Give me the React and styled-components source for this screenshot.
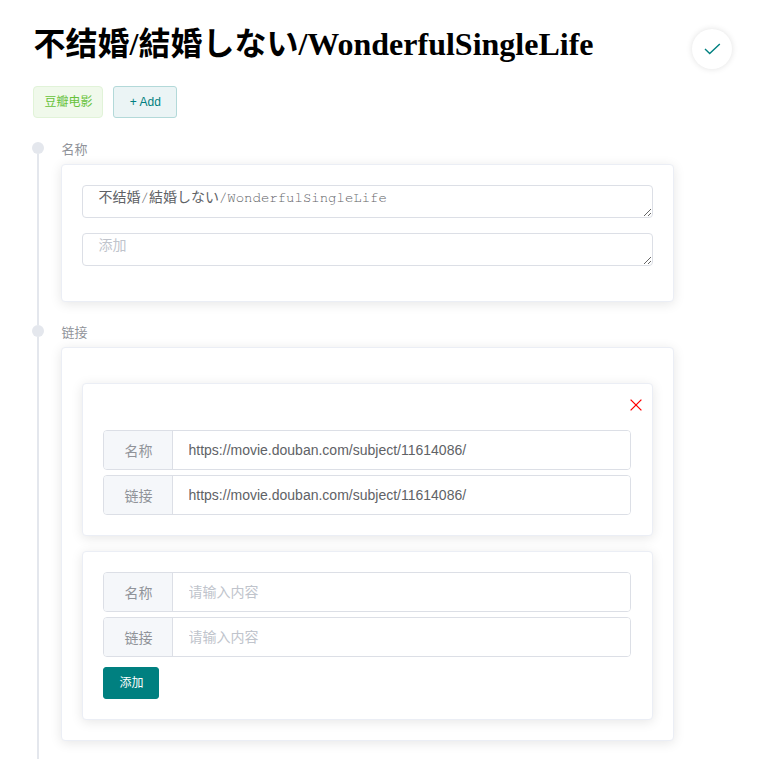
import React from "react";
import styled, { createGlobalStyle } from "styled-components";

const SANS = '"Liberation Sans", "Noto Sans CJK SC", sans-serif';
const MONO = '"Courier 10 Pitch", "Nimbus Mono PS", "FreeMono", "Liberation Mono", "Noto Sans CJK SC", monospace';

const GlobalStyle = createGlobalStyle`
  *, *::before, *::after { box-sizing: border-box; }
  html { height: 759px; overflow: hidden; background: #fff; }
  body { margin: 0; height: 759px; overflow: hidden; font-family: ${SANS}; color: #303133; }
`;

const Page = styled.main`
  height: 759px;
  padding: 22px 35px 0 33px;
  overflow: hidden;
`;

const Header = styled.header`
  display: flex;
  justify-content: space-between;
  align-items: flex-start;
  height: 64px;
`;

const Title = styled.h1`
  margin: 0 0 0 0.5px;
  font: bold 32px/44px "Liberation Serif", "Noto Sans CJK SC", serif;
  color: #000;
  white-space: nowrap;
`;

const RoundButton = styled.button`
  display: flex;
  align-items: center;
  justify-content: center;
  width: 40px;
  height: 40px;
  margin: 7px 1px 0 0;
  padding: 0;
  border: 0;
  border-radius: 50%;
  background: #fff;
  color: #008080;
  box-shadow: 0 0 6px rgba(0, 0, 0, 0.12);
`;

const Tags = styled.div`
  display: flex;
  gap: 10px;
  height: 32px;
`;

const Tag = styled.span`
  width: 70px;
  height: 32px;
  padding-left: 10.5px;
  border: 1px solid #e1f3d8;
  border-radius: 4px;
  background: #f0f9eb;
  color: #67c23a;
  font-size: 12px;
  line-height: 30px;
  white-space: nowrap;
`;

const AddTag = styled.button`
  width: 64px;
  height: 32px;
  padding: 0 0 0 0.6px;
  border: 1px solid #b3d9d9;
  border-radius: 3px;
  background: #ebf4f5;
  color: #008080;
  font: 12px/30px ${SANS};
`;

const Timeline = styled.ul`
  margin: 24px 0 0;
  padding: 0;
  list-style: none;
`;

const TimelineItem = styled.li`
  display: grid;
  grid-template-columns: 10px 613px;
  column-gap: 18px;
  height: ${(p) => p.$height}px;
`;

const Rail = styled.div`
  display: flex;
  flex-direction: column;
  align-items: center;
`;

const Node = styled.span`
  flex: none;
  width: 12px;
  height: 12px;
  border-radius: 50%;
  background: #e4e7ed;
`;

const Tail = styled.span`
  flex: 1;
  width: 2px;
  background: #e4e7ed;
`;

const Timestamp = styled.div`
  height: 22px;
  padding: 1px 0 0 0.5px;
  color: #909399;
  font-size: 13px;
  line-height: 13px;
`;

const Card = styled.section`
  height: ${(p) => p.$height}px;
  padding: ${(p) => p.$top || 20}px 20px 0;
  border: 1px solid #ebeef5;
  border-radius: 4px;
  background: #fff;
  box-shadow: 0 2px 12px rgba(0, 0, 0, 0.1);
  & + & { margin-top: 15px; }
`;

const TextArea = styled.textarea`
  display: block;
  width: 571px;
  height: 33px;
  margin: 0 0 15px;
  padding: ${(p) => (p.$mono ? 2 : 1)}px 15.5px 5px;
  border: 1px solid #dcdfe6;
  border-radius: 4px;
  color: #606266;
  font: 14px/21px ${(p) => (p.$mono ? MONO : SANS)};
  resize: vertical;
  outline: none;
  overflow: hidden;
  &::placeholder { color: #c0c4cc; }
`;

const CloseRow = styled.div`
  display: flex;
  justify-content: flex-end;
  height: 26px;
  margin: -5px -10px 5px 0;
  color: #f00;
`;

const Field = styled.label`
  display: flex;
  width: 528px;
  height: 40px;
  margin-bottom: 5px;
  border: 1px solid #dcdfe6;
  border-radius: 4px;
  overflow: hidden;
`;

const Prepend = styled.span`
  flex: none;
  width: 69px;
  padding: 1px 0 0 20.5px;
  border-right: 1px solid #dcdfe6;
  background: #f5f7fa;
  color: #909399;
  font-size: 14px;
  line-height: 38px;
  white-space: nowrap;
`;

const Input = styled.input`
  flex: 1;
  min-width: 0;
  padding: 0 15.5px;
  border: 0;
  outline: none;
  color: #606266;
  font: 14px ${SANS};
  &::placeholder { color: #c0c4cc; }
`;

const PrimaryButton = styled.button`
  display: block;
  width: 56px;
  height: 32px;
  margin-top: 10px;
  padding: 0 0 0 1px;
  border: 1px solid #008080;
  border-radius: 3px;
  background: #008080;
  color: #fff;
  font: 12px/30px ${SANS};
`;

const CheckIcon = () => (
  <svg width="18" height="18" viewBox="0 0 18 18" fill="none" stroke="currentColor" strokeWidth="1.4">
    <path d="M2 9 6.7 13.6 16.8 3.9" />
  </svg>
);

const CloseIcon = () => (
  <svg width="12" height="12" viewBox="0 0 12 12" fill="none" stroke="currentColor" strokeWidth="1.3">
    <path d="m.6.6 10.8 10.8M11.4.6.6 11.4" />
  </svg>
);

const LinkFields = ({ value }) => (
  <>
    {["名称", "链接"].map((label) => (
      <Field key={label}>
        <Prepend>{label}</Prepend>
        <Input defaultValue={value} placeholder="请输入内容" />
      </Field>
    ))}
  </>
);

export default function App() {
  return (
    <Page>
      <GlobalStyle />
      <Header>
        <Title>不结婚/結婚しない/WonderfulSingleLife</Title>
        <RoundButton aria-label="保存"><CheckIcon /></RoundButton>
      </Header>
      <Tags>
        <Tag>豆瓣电影</Tag>
        <AddTag>+ Add</AddTag>
      </Tags>
      <Timeline>
        <TimelineItem $height={183}>
          <Rail><Node /><Tail /></Rail>
          <div>
            <Timestamp>名称</Timestamp>
            <Card $height={138}>
              <TextArea $mono defaultValue="不结婚/結婚しない/WonderfulSingleLife" spellCheck={false} />
              <TextArea placeholder="添加" />
            </Card>
          </div>
        </TimelineItem>
        <TimelineItem $height={434}>
          <Rail><Node /><Tail /></Rail>
          <div>
            <Timestamp>链接</Timestamp>
            <Card $height={394} $top={35}>
              <Card $height={153}>
                <CloseRow><CloseIcon /></CloseRow>
                <LinkFields value="https://movie.douban.com/subject/11614086/" />
              </Card>
              <Card $height={169}>
                <LinkFields />
                <PrimaryButton>添加</PrimaryButton>
              </Card>
            </Card>
          </div>
        </TimelineItem>
      </Timeline>
    </Page>
  );
}
